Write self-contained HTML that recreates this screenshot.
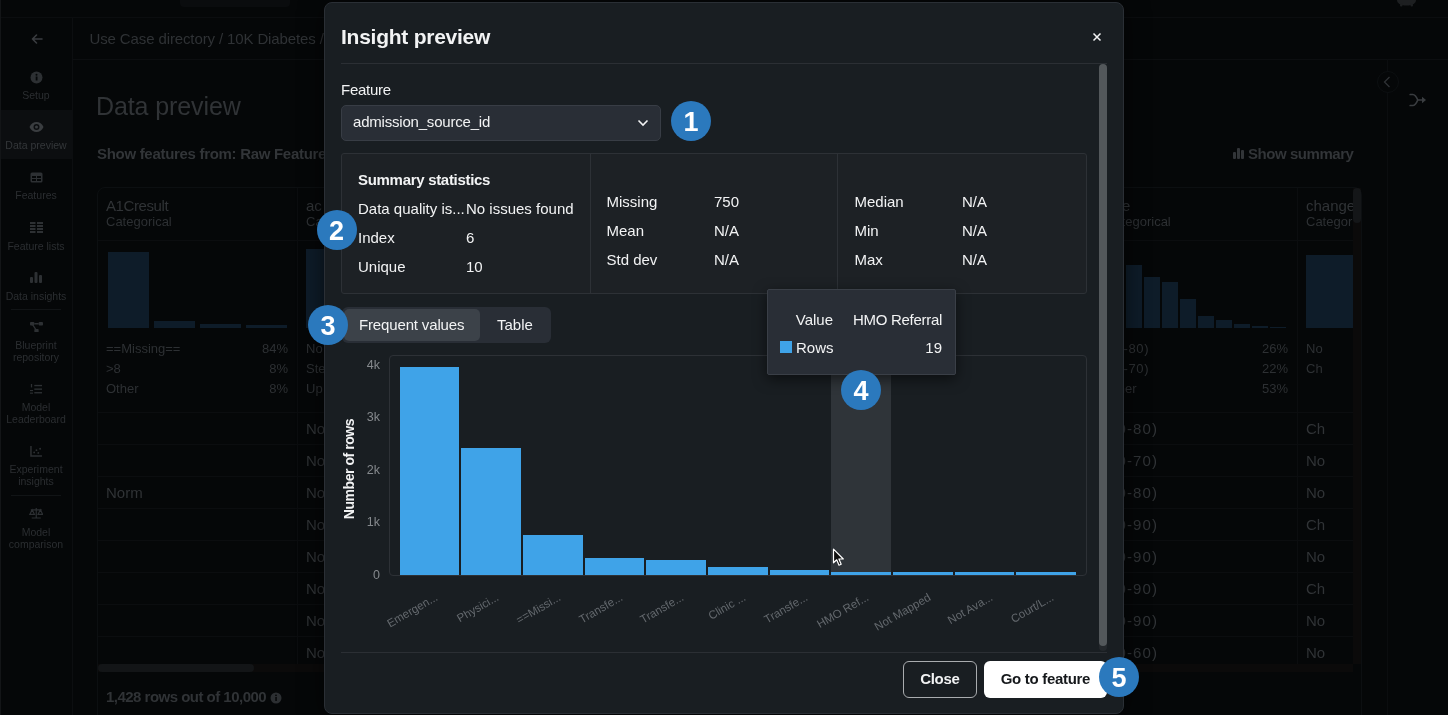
<!DOCTYPE html>
<html lang="en">
<head>
<meta charset="utf-8">
<title>Insight preview</title>
<style>
*{box-sizing:border-box;margin:0;padding:0}
html,body{width:1448px;height:715px;overflow:hidden;background:#050708}
body{font-family:"Liberation Sans",sans-serif;color:#fff;position:relative}
.abs{position:absolute}
.t{position:absolute;white-space:nowrap;line-height:1}
#bg{will-change:transform;position:absolute;left:0;top:0;width:1448px;height:715px;background:#050708;color:#3a3d40}
#topbar{position:absolute;left:0;top:0;width:1448px;height:18px;background:#050708;border-bottom:1px solid #0b0d0f}
#side{position:absolute;left:0;top:18px;width:73px;height:697px;background:#050708;border-right:1px solid #0c0e10;border-left:1px solid #131517}
#ledge{position:absolute;left:0;top:0;width:1px;height:715px;background:#131517}
#crumb{position:absolute;left:73px;top:18px;width:1375px;height:42px;border-bottom:1px solid #0c0e10}
.nav{position:absolute;left:1px;width:70px;text-align:center;font-size:10.5px;line-height:12px;color:#2b2e31}
.nav .ic{height:14px;margin-bottom:5px;display:flex;align-items:center;justify-content:center}
.nav.on{color:#34373a}
.hl{position:absolute;height:1px;background:#0b0d0f}
.vl{position:absolute;width:1px;background:#0b0d0f}
.cell{position:absolute;font-size:15px;line-height:1;color:#303336;white-space:nowrap}
.sm{position:absolute;font-size:13px;line-height:1;color:#2d3033;white-space:nowrap}
.hb{position:absolute;background:#0e1c29}
#modal{will-change:transform;position:absolute;left:324px;top:2px;width:800px;height:712px;background:#191e22;border:1px solid #2a2f35;border-radius:8px;box-shadow:0 4px 24px rgba(0,0,0,.6)}
.m{position:absolute;white-space:nowrap;line-height:1;color:#f2f3f4;font-size:15px}
.badge{position:absolute;width:40px;height:40px;border-radius:50%;background:#2b79bd;color:#fff;font-weight:bold;font-size:27px;line-height:42px;text-align:center}
.bar{position:absolute;background:#3fa3e8}
.xl{position:absolute;font-size:11.5px;line-height:1;color:#63686d;white-space:nowrap;transform-origin:100% 50%;transform:rotate(-30deg);text-align:right;width:100px}
.yl{position:absolute;font-size:12.5px;line-height:1;color:#85898d;width:30px;text-align:right}
</style>
</head>
<body>
<div id="bg">
<div id="topbar"><div class="abs" style="left:180px;top:0;width:110px;height:7px;background:#0a0c0e;border-radius:0 0 4px 4px"></div><svg class="abs" style="left:1395px;top:0" width="23" height="7" viewBox="0 0 23 7"><path d="M2 0c0 3 3 5.500 9.500 5.500S21 3 21 0z" fill="#1d1f21"/><rect x="5" y="3.500" width="2.500" height="3" rx="1" fill="#1d1f21"/><rect x="15.500" y="3.500" width="2.500" height="3" rx="1" fill="#1d1f21"/></svg></div>
<div id="ledge"></div><div id="side"><svg class="abs" style="left:28.5px;top:14.2px" width="14" height="14" viewBox="0 0 14 14"><path d="M12 7H2.5M6.5 3L2.5 7l4 4" fill="none" stroke="#3a3d40" stroke-width="1.600" stroke-linecap="round" stroke-linejoin="round"/></svg></div>
<div id="crumb"><div class="t" style="left:16.5px;top:13px;font-size:15px;letter-spacing:-.12px;color:#2f3235">Use Case directory / 10K Diabetes /</div></div>
<div class="abs" style="left:1px;top:110px;width:71px;height:49px;background:#0c0e10"></div>
<div class="nav" style="top:70px"><div class="ic"><svg width="13" height="13" viewBox="0 0 13 13"><circle cx="6.5" cy="6.5" r="6" fill="#2d3033"/><rect x="5.7" y="5.5" width="1.8" height="4" fill="#050708"/><circle cx="6.5" cy="3.7" r="1" fill="#050708"/></svg></div>Setup</div>
<div class="nav on" style="top:120px"><div class="ic"><svg width="15" height="12" viewBox="0 0 15 12"><path d="M.5 6C2 2.5 4.5 1 7.500 1s5.500 1.500 7 5c-1.500 3.500-4 5-7 5S2 9.500.5 6z" fill="#3a3d40"/><circle cx="7.500" cy="6" r="3" fill="#0c0e10"/><circle cx="7.500" cy="6" r="1.500" fill="#3a3d40"/></svg></div>Data preview</div>
<div class="nav" style="top:170px"><div class="ic"><svg width="13" height="11" viewBox="0 0 13 11"><rect x=".5" y=".5" width="12" height="10" rx="1.500" fill="#2d3033"/><rect x="2" y="4" width="4" height="2" fill="#050708"/><rect x="7" y="4" width="4" height="2" fill="#050708"/><rect x="2" y="7" width="4" height="2" fill="#050708"/><rect x="7" y="7" width="4" height="2" fill="#050708"/></svg></div>Features</div>
<div class="nav" style="top:220.5px"><div class="ic"><svg width="13" height="11" viewBox="0 0 13 11"><g fill="#2d3033"><rect x="0" y="0" width="5.500" height="2"/><rect x="7" y="0" width="6" height="2"/><rect x="0" y="3" width="5.500" height="2"/><rect x="7" y="3" width="6" height="2"/><rect x="0" y="6" width="5.500" height="2"/><rect x="7" y="6" width="6" height="2"/><rect x="0" y="9" width="5.500" height="2"/><rect x="7" y="9" width="6" height="2"/></g></svg></div>Feature lists</div>
<div class="nav" style="top:270.5px"><div class="ic"><svg width="12" height="11" viewBox="0 0 12 11"><g fill="#2d3033"><rect x="0" y="5" width="3" height="6" rx="1"/><rect x="4.500" y="0" width="3" height="11" rx="1"/><rect x="9" y="3" width="3" height="8" rx="1"/></g></svg></div>Data insights</div>
<div class="hl" style="left:11px;top:309px;width:50px;background:#111416"></div>
<div class="nav" style="top:320px"><div class="ic"><svg width="13" height="10.4" viewBox="0 0 15 12"><g fill="#2d3033"><rect x="0" y="0" width="5" height="4" rx="1"/><rect x="10" y="0" width="5" height="4" rx="1"/><rect x="5" y="8" width="5" height="4" rx="1"/></g><path d="M5 2h5M3 3l4 6" stroke="#2d3033" stroke-width="1.500" fill="none"/></svg></div>Blueprint<br>repository</div>
<div class="nav" style="top:382px"><div class="ic"><svg width="12" height="10.3" viewBox="0 0 14 12"><g fill="#2d3033"><rect x="5" y="1" width="9" height="1.600"/><rect x="5" y="5.200" width="9" height="1.600"/><rect x="5" y="9.400" width="9" height="1.600"/><rect x="1" y="0" width="1.500" height="4"/><rect x="0" y="7" width="3.500" height="1.300"/><rect x="0" y="10" width="3.500" height="1.300"/></g></svg></div>Model<br>Leaderboard</div>
<div class="nav" style="top:444px"><div class="ic"><svg width="12" height="11" viewBox="0 0 13 12"><path d="M1 0v11h12" stroke="#2d3033" stroke-width="1.600" fill="none"/><g fill="#2d3033"><circle cx="4.500" cy="7" r="1"/><circle cx="7" cy="4.500" r="1"/><circle cx="9" cy="7.500" r="1"/><circle cx="11" cy="3" r="1"/></g></svg></div>Experiment<br>insights</div>
<div class="hl" style="left:11px;top:495px;width:50px;background:#111416"></div>
<div class="nav" style="top:506.5px"><div class="ic"><svg width="14.5" height="10.9" viewBox="0 0 16 12"><path d="M8 0v11M3 11h10M2 2h12M3.500 2L1 7h5zM12.500 2L10 7h5z" stroke="#2d3033" stroke-width="1.300" fill="none"/></svg></div>Model<br>comparison</div>
<div class="t" style="left:96px;top:93.5px;font-size:25px;letter-spacing:-.1px;color:#303336">Data preview</div>
<div class="t" style="left:97px;top:146px;font-size:15px;font-weight:bold;letter-spacing:-.3px;color:#323538">Show features from: Raw Feature</div>
<div class="t" style="left:1248px;top:146px;font-size:15px;font-weight:bold;letter-spacing:-.45px;color:#323538">Show summary</div>
<svg class="abs" style="left:1233px;top:148px" width="11" height="11" viewBox="0 0 11 11"><g fill="#323538"><rect x="0" y="4" width="3" height="7" rx="1"/><rect x="4" y="0" width="3" height="11" rx="1"/><rect x="8" y="2" width="3" height="9" rx="1"/></g></svg>
<div class="vl" style="left:1387px;top:59px;height:656px"></div>
<div class="abs" style="left:1377px;top:70.500px;width:22px;height:22px;border-radius:50%;background:#050708;border:1px solid #0c0f11"></div>
<svg class="abs" style="left:1383px;top:75.500px" width="9" height="12" viewBox="0 0 9 12"><path d="M6.500 1L1.500 6l5 5" fill="none" stroke="#2f3235" stroke-width="1.300"/></svg>
<svg class="abs" style="left:1409px;top:92.500px" width="18" height="14" viewBox="0 0 18 14"><path d="M1.200 1.500h2.600c2 0 3.400 1.800 5 5.500M1.200 12.500h2.600c2 0 3.400-1.800 5-5.500h5.500" fill="none" stroke="#3a3d40" stroke-width="1.700" stroke-linecap="round" stroke-linejoin="round"/><path d="M13 3.800L17 7l-4 3.200z" fill="#3a3d40"/></svg>
<div class="abs" style="left:97px;top:187px;width:1265px;height:540px;border:1px solid #0c0f11;border-radius:8px 8px 0 0"></div>
<div class="hl" style="left:98px;top:240px;width:1262px"></div>
<div class="vl" style="left:297px;top:188px;height:476px"></div>
<div class="vl" style="left:1297px;top:188px;height:476px"></div>
<div class="cell" style="left:106px;top:198px;letter-spacing:-.4px">A1Cresult</div>
<div class="sm" style="left:106px;top:215px">Categorical</div>
<div class="cell" style="left:306px;top:198px">ac</div>
<div class="sm" style="left:306px;top:215px">Ca</div>
<div class="cell" style="left:1122px;top:198px">e</div>
<div class="sm" style="left:1105px;top:215px">Categorical</div>
<div class="cell" style="left:1306px;top:198px">change</div>
<div class="sm" style="left:1306px;top:215px">Categori</div>
<div class="hb" style="left:108px;top:252px;width:41px;height:76px"></div>
<div class="hb" style="left:154px;top:321px;width:41px;height:7px"></div>
<div class="hb" style="left:200px;top:324px;width:41px;height:4px"></div>
<div class="hb" style="left:246px;top:325px;width:41px;height:3px"></div>
<div class="hb" style="left:306px;top:249px;width:18px;height:79px"></div>
<div class="hb" style="left:1126px;top:265px;width:16px;height:63px"></div>
<div class="hb" style="left:1144px;top:277px;width:16px;height:51px"></div>
<div class="hb" style="left:1162px;top:282px;width:16px;height:46px"></div>
<div class="hb" style="left:1180px;top:299px;width:16px;height:29px"></div>
<div class="hb" style="left:1198px;top:316px;width:16px;height:12px"></div>
<div class="hb" style="left:1216px;top:320px;width:16px;height:8px"></div>
<div class="hb" style="left:1234px;top:324px;width:16px;height:4px"></div>
<div class="hb" style="left:1252px;top:326px;width:16px;height:2px"></div>
<div class="hb" style="left:1270px;top:327px;width:16px;height:1px"></div>
<div class="hb" style="left:1306px;top:255px;width:47px;height:73px"></div>
<div class="sm" style="left:106px;top:342px">==Missing==</div>
<div class="sm" style="left:248px;top:342px;width:40px;text-align:right">84%</div>
<div class="sm" style="left:106px;top:362px">&gt;8</div>
<div class="sm" style="left:248px;top:362px;width:40px;text-align:right">8%</div>
<div class="sm" style="left:106px;top:382px">Other</div>
<div class="sm" style="left:248px;top:382px;width:40px;text-align:right">8%</div>
<div class="sm" style="left:306px;top:342px">No</div>
<div class="sm" style="left:306px;top:362px">Ste</div>
<div class="sm" style="left:306px;top:382px">Up</div>
<div class="sm" style="left:1103px;letter-spacing:.6px;top:342px">(70-80)</div>
<div class="sm" style="left:1248px;top:342px;width:40px;text-align:right">26%</div>
<div class="sm" style="left:1103px;letter-spacing:.6px;top:362px">(60-70)</div>
<div class="sm" style="left:1248px;top:362px;width:40px;text-align:right">22%</div>
<div class="sm" style="left:1104px;top:382px">Other</div>
<div class="sm" style="left:1248px;top:382px;width:40px;text-align:right">53%</div>
<div class="sm" style="left:1306px;top:342px">No</div>
<div class="sm" style="left:1306px;top:362px">Ch</div>
<div class="hl" style="left:98px;top:412px;width:1255px"></div>
<div class="cell" style="left:306px;top:421px">No</div><div class="cell" style="left:1102px;top:421px;letter-spacing:1.1px">(70-80)</div><div class="cell" style="left:1306px;top:421px">Ch</div>
<div class="hl" style="left:98px;top:444px;width:1255px"></div>
<div class="cell" style="left:306px;top:453px">No</div><div class="cell" style="left:1102px;top:453px;letter-spacing:1.1px">(60-70)</div><div class="cell" style="left:1306px;top:453px">No</div>
<div class="hl" style="left:98px;top:476px;width:1255px"></div>
<div class="cell" style="left:306px;top:485px">No</div><div class="cell" style="left:1102px;top:485px;letter-spacing:1.1px">(70-80)</div><div class="cell" style="left:1306px;top:485px">No</div>
<div class="hl" style="left:98px;top:508px;width:1255px"></div>
<div class="cell" style="left:306px;top:517px">No</div><div class="cell" style="left:1102px;top:517px;letter-spacing:1.1px">(80-90)</div><div class="cell" style="left:1306px;top:517px">Ch</div>
<div class="hl" style="left:98px;top:540px;width:1255px"></div>
<div class="cell" style="left:306px;top:549px">No</div><div class="cell" style="left:1102px;top:549px;letter-spacing:1.1px">(80-90)</div><div class="cell" style="left:1306px;top:549px">No</div>
<div class="hl" style="left:98px;top:572px;width:1255px"></div>
<div class="cell" style="left:306px;top:581px">No</div><div class="cell" style="left:1102px;top:581px;letter-spacing:1.1px">(80-90)</div><div class="cell" style="left:1306px;top:581px">Ch</div>
<div class="hl" style="left:98px;top:604px;width:1255px"></div>
<div class="cell" style="left:306px;top:613px">No</div><div class="cell" style="left:1102px;top:613px;letter-spacing:1.1px">(80-90)</div><div class="cell" style="left:1306px;top:613px">No</div>
<div class="hl" style="left:98px;top:636px;width:1255px"></div>
<div class="cell" style="left:306px;top:645px">No</div><div class="cell" style="left:1102px;top:645px;letter-spacing:1.1px">(50-60)</div><div class="cell" style="left:1306px;top:645px">No</div>
<div class="cell" style="left:106px;top:485px">Norm</div>
<div class="abs" style="left:1353px;top:188px;width:8px;height:476px;background:#0b0a0a"></div>
<div class="abs" style="left:1353px;top:188px;width:8px;height:35px;border-radius:4px;background:#141618"></div>
<div class="abs" style="left:98px;top:664px;width:1255px;height:8px;background:#0b0a0a"></div>
<div class="abs" style="left:98px;top:664px;width:156px;height:8px;border-radius:4px;background:#131517"></div>
<div class="t" style="left:106px;top:689px;font-size:15px;font-weight:bold;letter-spacing:-.52px;color:#303336">1,428 rows out of 10,000</div>
<svg class="abs" style="left:269.500px;top:691.500px" width="12" height="12" viewBox="0 0 12 12"><circle cx="6" cy="6" r="5.500" fill="#2c2f32"/><rect x="5.300" y="5" width="1.500" height="4" fill="#050708"/><circle cx="6" cy="3.300" r=".9" fill="#050708"/></svg>
</div>
<div id="modal">
<div class="m" style="left:16px;top:22.5px;font-size:21px;font-weight:bold;letter-spacing:-.25px">Insight preview</div>
<svg class="abs" style="left:767px;top:29px" width="10" height="10" viewBox="0 0 10 10"><path d="M1.500 1.500l7 7M8.500 1.500l-7 7" stroke="#f2f3f4" stroke-width="1.500" fill="none"/></svg>
<div class="abs" style="left:16px;top:60px;width:766px;height:1px;background:#2b2f34"></div>
<div class="abs" style="left:774px;top:61px;width:8px;height:587px;border-radius:4px;background:#24282c"></div>
<div class="abs" style="left:774px;top:61px;width:8px;height:582px;border-radius:4px;background:#53585b"></div>
<div class="m" style="left:16px;top:79px;letter-spacing:-.25px">Feature</div>
<div class="abs" style="left:16px;top:101.5px;width:320px;height:36px;background:#292e36;border:1px solid #383d45;border-radius:5px"></div>
<div class="m" style="left:28px;top:111px;letter-spacing:-.2px">admission_source_id</div>
<svg class="abs" style="left:312px;top:116px" width="12" height="8" viewBox="0 0 12 8"><path d="M1.500 1.500L6 6l4.500-4.500" stroke="#f2f3f4" stroke-width="1.600" fill="none"/></svg>
<div class="abs" style="left:16px;top:150px;width:746px;height:141px;background:#1d2125;border:1px solid #2d3136;border-radius:3px"></div>
<div class="abs" style="left:264.5px;top:151px;width:1px;height:139px;background:#2d3136"></div>
<div class="abs" style="left:512px;top:151px;width:1px;height:139px;background:#2d3136"></div>
<div class="m" style="left:33px;top:169px;font-weight:bold;letter-spacing:-.3px">Summary statistics</div>
<div class="m" style="left:33px;top:198px;">Data quality is...</div>
<div class="m" style="left:141px;top:198px;">No issues found</div>
<div class="m" style="left:33px;top:227px;">Index</div>
<div class="m" style="left:141px;top:227px;">6</div>
<div class="m" style="left:33px;top:256px;">Unique</div>
<div class="m" style="left:141px;top:256px;">10</div>
<div class="m" style="left:281.5px;top:191px;">Missing</div>
<div class="m" style="left:389px;top:191px;">750</div>
<div class="m" style="left:281.5px;top:220px;">Mean</div>
<div class="m" style="left:389px;top:220px;">N/A</div>
<div class="m" style="left:281.5px;top:249px;">Std dev</div>
<div class="m" style="left:389px;top:249px;">N/A</div>
<div class="m" style="left:529.5px;top:191px;">Median</div>
<div class="m" style="left:637px;top:191px;">N/A</div>
<div class="m" style="left:529.5px;top:220px;">Min</div>
<div class="m" style="left:637px;top:220px;">N/A</div>
<div class="m" style="left:529.5px;top:249px;">Max</div>
<div class="m" style="left:637px;top:249px;">N/A</div>
<div class="abs" style="left:17px;top:303.5px;width:208.5px;height:36px;background:#292e36;border-radius:6px"></div>
<div class="abs" style="left:19px;top:305.5px;width:136px;height:32px;background:#3c4249;border-radius:5px"></div>
<div class="m" style="left:34px;top:313.5px;letter-spacing:-.15px">Frequent values</div>
<div class="m" style="left:172px;top:313.5px;">Table</div>
<div class="abs" style="left:64px;top:351.5px;width:698px;height:221.5px;border:1px solid #2d3136;border-radius:4px"></div>
<div class="abs" style="left:506px;top:352.5px;width:60px;height:219.5px;background:#2f3439"></div>
<div class="yl" style="left:25px;top:356px">4k</div>
<div class="yl" style="left:25px;top:408px">3k</div>
<div class="yl" style="left:25px;top:461px">2k</div>
<div class="yl" style="left:25px;top:513px">1k</div>
<div class="yl" style="left:25px;top:566px">0</div>
<div class="m" style="left:-36px;top:459px;width:120px;text-align:center;font-size:14px;font-weight:bold;letter-spacing:-.45px;transform:rotate(-90deg)">Number of rows</div>
<div class="bar" style="left:74.8px;top:364px;width:59.5px;height:207.6px"></div>
<div class="bar" style="left:136.45px;top:445px;width:59.5px;height:126.6px"></div>
<div class="bar" style="left:198.1px;top:532px;width:59.5px;height:39.6px"></div>
<div class="bar" style="left:259.75px;top:555px;width:59.5px;height:16.6px"></div>
<div class="bar" style="left:321.4px;top:557px;width:59.5px;height:14.6px"></div>
<div class="bar" style="left:383.05px;top:564px;width:59.5px;height:7.6px"></div>
<div class="bar" style="left:444.7px;top:567px;width:59.5px;height:4.6px"></div>
<div class="bar" style="left:506.35px;top:569.3px;width:59.5px;height:2.3px"></div>
<div class="bar" style="left:568.0px;top:569.3px;width:59.5px;height:2.3px"></div>
<div class="bar" style="left:629.65px;top:569.3px;width:59.5px;height:2.3px"></div>
<div class="bar" style="left:691.3px;top:569.3px;width:59.5px;height:2.3px"></div>
<div class="xl" style="left:11.8px;top:588px">Emergen...</div>
<div class="xl" style="left:73.45px;top:588px">Physici...</div>
<div class="xl" style="left:135.1px;top:588px">==Missi...</div>
<div class="xl" style="left:196.75px;top:588px">Transfe...</div>
<div class="xl" style="left:258.4px;top:588px">Transfe...</div>
<div class="xl" style="left:320.05px;top:588px">Clinic ...</div>
<div class="xl" style="left:381.7px;top:588px">Transfe...</div>
<div class="xl" style="left:443.35px;top:588px">HMO Ref...</div>
<div class="xl" style="left:505.0px;top:588px">Not Mapped</div>
<div class="xl" style="left:566.65px;top:588px">Not Ava...</div>
<div class="xl" style="left:628.3px;top:588px">Court/L...</div>
<div class="abs" style="left:16px;top:649px;width:766px;height:1px;background:#2b2f34"></div>
<div class="abs" style="left:578px;top:658px;width:73.7px;height:36.5px;border:1.2px solid #a9acaf;border-radius:6px"></div>
<div class="m" style="left:578px;top:668px;width:73.7px;text-align:center;font-weight:bold;letter-spacing:-.3px">Close</div>
<div class="abs" style="left:659.2px;top:658px;width:122.5px;height:36.5px;background:#fff;border-radius:6px"></div>
<div class="m" style="left:659.2px;top:668px;width:122.5px;text-align:center;font-weight:bold;letter-spacing:-.3px;color:#15181b">Go to feature</div>
<div class="abs" style="left:442px;top:286px;width:188.5px;height:86px;background:#292e36;border:1px solid #3a3f47;border-radius:2px;box-shadow:0 4px 14px rgba(0,0,0,.55)"></div>
<div class="m" style="left:408px;top:309px;width:100px;text-align:right">Value</div>
<div class="m" style="left:517px;top:309px;width:100px;text-align:right;letter-spacing:-.3px">HMO Referral</div>
<div class="abs" style="left:455px;top:338px;width:12px;height:12px;background:#3fa3e8"></div>
<div class="m" style="left:471px;top:336.5px;">Rows</div>
<div class="m" style="left:517px;top:336.5px;width:100px;text-align:right">19</div>
<div class="badge" style="left:346px;top:98px">1</div>
<div class="badge" style="left:-8.5px;top:206.5px">2</div>
<div class="badge" style="left:-17px;top:302px">3</div>
<div class="badge" style="left:516px;top:367px">4</div>
<div class="badge" style="left:774px;top:654px">5</div>
<svg class="abs" style="left:507px;top:545px" width="14" height="20" viewBox="0 0 14 20"><path d="M1.500 1.200v13.600l3.200-3 2.300 5.400 2.200-.9-2.300-5.300h4.400z" fill="#111" stroke="#fff" stroke-width="1.200" stroke-linejoin="round"/></svg>
</div>
</body>
</html>
